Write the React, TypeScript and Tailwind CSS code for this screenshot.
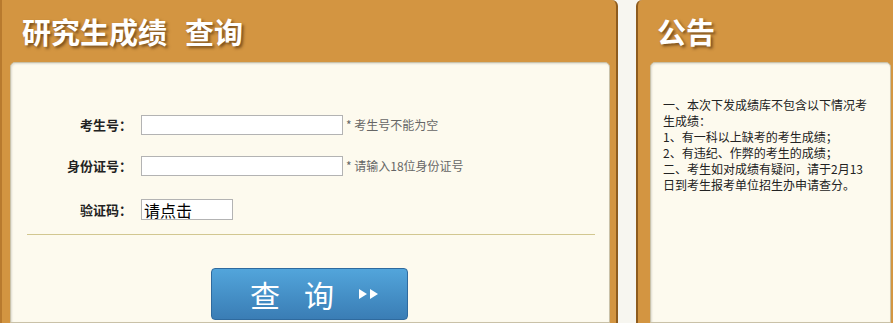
const cjk = "font-['Noto_Sans_CJK_SC','Noto_Sans',sans-serif]";

function Row({ label, children }: { label: string; children: React.ReactNode }) {
  return (
    <div className="flex items-center">
      <div className="w-[121px] shrink-0 text-right text-[13px] font-bold text-[#222] leading-5">{label}</div>
      <div className="ml-[9px] flex items-center">{children}</div>
    </div>
  );
}

function Hint({ text }: { text: string }) {
  return <span className="ml-[3px] text-[12px] text-[#666]">* {text}</span>;
}

export default function App() {
  return (
    <div className={`flex h-[323px] w-[893px] overflow-hidden bg-[#f7f6f0] ${cjk}`}>
      {/* 左侧：成绩查询 */}
      <div className="flex w-[618px] shrink-0 flex-col rounded-tr-[6px] border-l-[2px] border-r-[2px] border-l-[#b87a2e] border-r-[#8e5c1e] bg-[#d39541]">
        <div className="flex h-[62px] items-center pl-[20px]">
          <h1 className="text-[29px] font-bold leading-none text-white [text-shadow:2px_2px_3px_rgba(60,30,0,0.6)]">
            研究生成绩<span className="ml-[18px]">查询</span>
          </h1>
        </div>
        <div className="ml-[8px] mr-[6px] flex-1 rounded-t-[5px] border border-[#c9c1a8] bg-[#fdfaee] shadow-[inset_1px_1px_2px_rgba(0,0,0,0.12)]">
          <div className="flex flex-col pt-[52px]">
            <Row label="考生号：">
              <input className="h-[20px] w-[202px] border border-[#b3b3b3] bg-white" />
              <Hint text="考生号不能为空" />
            </Row>
            <div className="mt-[21px]">
              <Row label="身份证号：">
                <input className="h-[20px] w-[202px] border border-[#b3b3b3] bg-white" />
                <Hint text="请输入18位身份证号" />
              </Row>
            </div>
            <div className="mt-[23px]">
              <Row label="验证码：">
                <div className="flex h-[21px] w-[92px] items-center border border-[#b3b3b3] bg-white pl-[2px] text-[16px] leading-none text-black">
                  请点击
                </div>
              </Row>
            </div>
            <div className="ml-[16px] mr-[14px] mt-[14px] h-px bg-[#d2c790]" />
            <div className="mt-[33px] pl-[200px]">
              <button className="flex h-[52px] w-[197px] items-center rounded-[4px] border border-[#2f6a9e] bg-gradient-to-b from-[#52a5db] to-[#3a7db5] pl-[38px] text-[30px] leading-none text-white">
                <span>查</span>
                <span className="ml-[24px]">询</span>
                <svg className="ml-[24px]" width="22" height="12" viewBox="0 0 22 12">
                  <path d="M1 1 L9 6 L1 11 Z M12 1 L20 6 L12 11 Z" fill="white" />
                </svg>
              </button>
            </div>
          </div>
        </div>
      </div>

      {/* 右侧：公告 */}
      <div className="ml-[18px] flex flex-1 flex-col rounded-tl-[6px] border-l-[2px] border-l-[#8e5c1e] bg-[#d39541]">
        <div className="flex h-[62px] items-center pl-[19px]">
          <h2 className="text-[29px] font-bold leading-none text-white [text-shadow:2px_2px_3px_rgba(60,30,0,0.6)]">公告</h2>
        </div>
        <div className="ml-[12px] mr-[2px] flex-1 rounded-t-[5px] border border-[#c9c1a8] bg-[#fdfaee] px-[12px] pt-[34px] shadow-[inset_1px_1px_2px_rgba(0,0,0,0.12)]">
          <p className="text-[12px] leading-[16px] text-[#222]">
            一、本次下发成绩库不包含以下情况考
            <br />
            生成绩：
            <br />
            1、有一科以上缺考的考生成绩；
            <br />
            2、有违纪、作弊的考生的成绩；
            <br />
            二、考生如对成绩有疑问，请于2月13
            <br />
            日到考生报考单位招生办申请查分。
          </p>
        </div>
      </div>
    </div>
  );
}
